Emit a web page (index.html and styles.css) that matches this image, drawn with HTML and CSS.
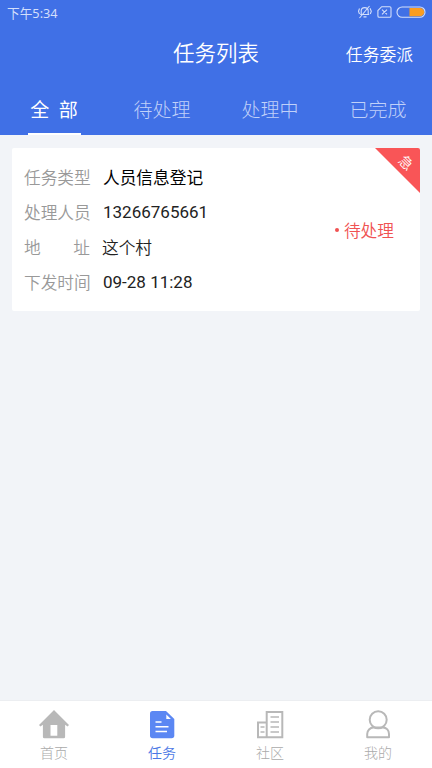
FILE: index.html
```html
<!DOCTYPE html>
<html lang="zh-CN">
<head>
<meta charset="utf-8">
<title>任务列表</title>
<link rel="stylesheet" href="styles.css">
</head>
<body>
<div class="app">
  <header class="header">
    <div class="status">
      <span class="clock">下午5:34</span>
      <svg class="status-icons" width="70" height="16" viewBox="0 0 70 16" fill="none" stroke="#d3dffb" stroke-width="1.1">
        <path d="M2.200 10.500h9M3.200 10.300V7c0-4.500 7-4.500 7 0v3.300M5.500 12.900h3M1.500 4.500L.5 7.300l1 2.700M12 4.200l1.300 3-1 2.800M1.500 14L11.500 2"/>
        <path d="M23.700 2.700h8q1.300 0 1.300 1.300v8q0 1.300-1.300 1.300h-10.500q-1.300 0-1.300-1.300V6.500zM24 5.700l5 4.600M29 5.700l-5 4.600"/>
        <rect x="39" y="3" width="28" height="10.300" rx="5.150"/>
        <path d="M51.500 4h10.500a4.150 4.150 0 0 1 0 8.300H51.500z" fill="#fb9d20" stroke="none"/>
      </svg>
    </div>
    <div class="titlebar">
      <h1 class="title">任务列表</h1>
      <span class="assign">任务委派</span>
    </div>
    <nav class="tabs">
      <span class="tab tab-active"><span class="tab-label">全&nbsp; 部</span></span>
      <span class="tab">待处理</span>
      <span class="tab">处理中</span>
      <span class="tab">已完成</span>
    </nav>
  </header>
  <main class="content">
    <article class="card">
      <dl class="fields">
        <div class="row"><dt>任务类型</dt><dd class="strong">人员信息登记</dd></div>
        <div class="row"><dt>处理人员</dt><dd class="number">13266765661</dd></div>
        <div class="row"><dt class="spread"><span>地</span><span>址</span></dt><dd>这个村</dd></div>
        <div class="row"><dt>下发时间</dt><dd class="number">09-28 11:28</dd></div>
      </dl>
      <div class="state"><i class="dot"></i>待处理</div>
      <div class="ribbon"><span class="ribbon-text">急</span></div>
    </article>
  </main>
  <nav class="bottom">
    <a class="item">
      <svg width="32" height="30" viewBox="0 0 32 30"><path fill="#b8b8b8" fill-rule="evenodd" d="M16 0L31 14.900l-1.400 1.600-2.500-1.700V26.800q0 1.500-1.500 1.500H6.400q-1.500 0-1.500-1.500V14.800l-2.500 1.700L1 14.900zM12.500 15V25.700H19.300V15z"/></svg>
      <span>首页</span>
    </a>
    <a class="item item-active">
      <svg width="32" height="30" viewBox="0 0 32 30"><path fill="#5b87f3" d="M6.500 1H20L28.300 9V25.600q0 2.700-2.700 2.700H6.700Q4 28.300 4 25.600V3.500Q4 1 6.500 1z"/><path d="M20.300 4.500v4.600h4.600z" fill="#fff"/><path d="M9.500 12h6M9.500 16.800h13M9.500 21.500h11.500" stroke="#fff" stroke-width="1.500"/></svg>
      <span>任务</span>
    </a>
    <a class="item">
      <svg width="32" height="30" viewBox="0 0 32 30" fill="none" stroke="#b8b8b8"><path stroke-width="2" d="M12.700 27.300V2h15.600v25.300H4V12.500h8.700"/><path stroke-width="1.400" d="M16.500 7h8.500M16.500 12h8.500M16.500 17h8.500M16.500 22h8.500M6.500 17h4M6.500 22h4"/></svg>
      <span>社区</span>
    </a>
    <a class="item">
      <svg width="32" height="30" viewBox="0 0 32 30" fill="none" stroke="#b8b8b8" stroke-width="2"><circle cx="16.200" cy="9.800" r="8.500"/><path stroke-linejoin="round" d="M11.500 17.500h9.500c3.500 0 6 3 6 6.500v3.300H5.200V24c0-3.500 2.800-6.500 6.300-6.500z"/></svg>
      <span>我的</span>
    </a>
  </nav>
</div>
</body>
</html>
```
FILE: styles.css
```css
* { box-sizing: border-box; }
body {
  margin: 0;
  font-family: Roboto, "Noto Sans CJK SC", sans-serif;
  font-weight: 350;
  background: #f2f4f8;
}
.app { height: 768px; display: flex; flex-direction: column; }
.header { height: 135px; background: #4070e6; color: #fff; display: flex; flex-direction: column; }
.status {
  height: 26px;
  padding: 0 4px 2px 7px;
  display: flex;
  align-items: center;
  justify-content: space-between;
}
.clock { padding-top: 1px; font-family: "Noto Sans", "Noto Sans CJK SC", sans-serif; font-size: 12.700px; font-weight: 400; color: #d3dffb; line-height: 20px; }
.titlebar {
  height: 56px;
  display: grid;
  grid-template-columns: 1fr auto 1fr;
  align-items: center;
}
.title { grid-column: 2; margin: 0; font-size: 21.500px; font-weight: 350; line-height: 30px; }
.assign { justify-self: end; margin-right: 19px; padding-bottom: 1px; font-size: 16.800px; }
.tabs { flex: 1; display: grid; grid-template-columns: repeat(4, 1fr); }
.tab { display: flex; justify-content: center; align-items: center; font-size: 19px; font-weight: 300; color: #c0d1f9; }
.tab-active { color: #fff; font-weight: 400; }
.tab-label { width: 53px; height: 53px; padding-top: 3px; line-height: 51px; text-align: center; white-space: nowrap; border-bottom: 2px solid #fff; }
.content { flex: 1; padding: 13px 12px; }
.card { position: relative; height: 163px; background: #fff; border-radius: 2px; display: flex; justify-content: space-between; overflow: hidden; }
.fields { margin: 0; padding: 13px 0 0 12px; }
.row { height: 35px; display: flex; align-items: center; font-size: 16.700px; line-height: 35px; }
dt { width: 67px; margin-right: 12px; color: #999; white-space: nowrap; }
dd { margin: 0; color: #222; white-space: nowrap; }
.strong { color: #000; font-weight: 400; }
.number { padding-bottom: 2px; font-size: 17px; font-weight: 400; }
.spread { display: flex; justify-content: space-between; width: 66px; }
.state { align-self: center; margin-right: 26px; color: #f05252; font-size: 16.700px; display: flex; align-items: center; }
.dot { width: 4px; height: 4px; border-radius: 50%; background: #f05252; margin-right: 5px; }
.ribbon { position: absolute; top: 0; right: 0; width: 45px; height: 45px; background: #f95557; clip-path: polygon(0 0, 100% 0, 100% 100%); }
.ribbon-text { position: absolute; left: 24px; top: 7px; width: 14px; line-height: 16px; color: #fff; font-size: 14px; transform: rotate(45deg); }
.bottom { height: 68px; background: #fff; border-top: 1px solid #eceef1; display: grid; grid-template-columns: repeat(4, 1fr); }
.item { display: flex; flex-direction: column; align-items: center; padding-top: 9px; color: #aaa; font-size: 14px; font-weight: 300; line-height: 20px; }
.item svg { display: block; margin-bottom: 3px; }
.item-active { color: #4b78e5; font-weight: 350; }
```
